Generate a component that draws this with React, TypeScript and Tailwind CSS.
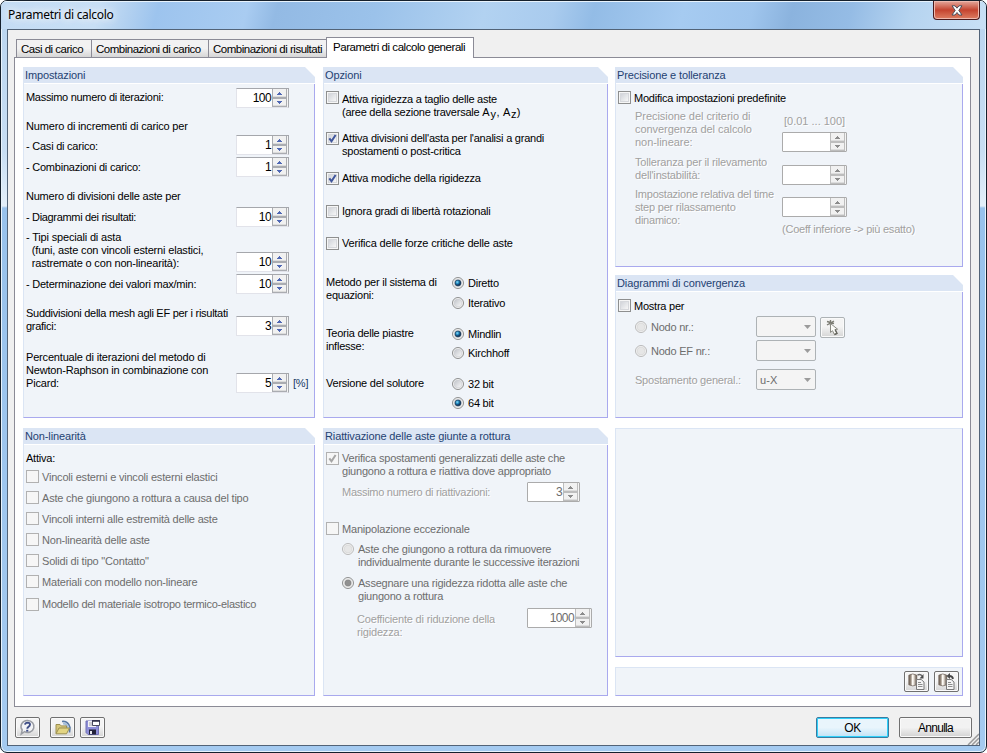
import type { ReactNode } from 'react';
import clsx from 'clsx';

const Text = ({ children, className, soft }: { children: ReactNode; className?: string; soft?: boolean }) => (
  <div
    className={clsx(
      'whitespace-pre leading-[13px]',
      soft && 'text-[#a0a0a0] [text-shadow:1px_1px_0_#fff]',
      className
    )}
  >
    {children}
  </div>
);

const Group = ({ title, className, children }: { title?: string; className: string; children?: ReactNode }) => (
  <section
    className={clsx(
      'flex flex-col border-r border-b border-l border-r-[#a9a9ee] border-b-[#a9a9ee] border-l-[#dbe5f4] bg-[#f0f4f9]',
      !title && 'border-t border-t-[#dbe5f4]',
      className
    )}
  >
    {title && (
      <div className="-mr-px h-[17px] shrink-0 border-b border-white bg-white">
        <div className="h-4 bg-[#dbe5f4] pt-0.5 pl-px text-[#1f4272] [clip-path:polygon(0_0,calc(100%-10px)_0,100%_10px,100%_100%,0_100%)]">
          <Text className="tracking-[-0.12px]">{title}</Text>
        </div>
      </div>
    )}
    {children}
  </section>
);

const Spinner = ({ value, wide, disabled, className }: { value?: string; wide?: boolean; disabled?: boolean; className?: string }) => {
  const arrow = disabled ? '#8c8c8c' : '#5068b4';
  return (
    <div
      className={clsx(
        'flex h-5 shrink-0 border bg-white',
        wide ? 'w-[65px]' : 'w-[53px]',
        disabled ? 'rounded-[1px] border-[#ababab] text-[#6d6d6d]' : 'border-[#e2e3ea] border-r-[#a5a7ac] border-t-[#a5a7ac]',
        className
      )}
    >
      <div className="flex-1 pt-[3px] pr-px text-right text-[12px] leading-[13px] tracking-[-0.6px]">{value}</div>
      <svg width="16" height="18" viewBox="0 0 16 18" shapeRendering="crispEdges">
        <rect width="16" height="18" fill="#f4f4f4" />
        <rect width="15" height="18" fill={disabled ? '#bdbdbd' : '#aaacb1'} />
        <rect x="1" y="0" width="13" height="8" fill="#f1f1f1" />
        <rect x="1" y="10" width="13" height="7" fill="#f1f1f1" />
        <path d="M1 7.5h13M1 16.5h13" stroke="#dcdcdc" />
        <path d="M7 3h1v1h1v1h1v1H5V5h1V4h1zM5 12h5v1H9v1H8v1H7v-1H6v-1H5z" fill={arrow} />
      </svg>
    </div>
  );
};

const CheckBox = ({ checked, disabled }: { checked?: boolean; disabled?: boolean }) => (
  <svg width="13" height="13" viewBox="0 0 13 13" className="shrink-0">
    <defs>
      <linearGradient id="boxFill" x2="1" y2="1">
        <stop offset="0" stopColor="#cfd2d8" />
        <stop offset="1" stopColor="#f9f9f9" />
      </linearGradient>
    </defs>
    <rect x=".5" y=".5" width="12" height="12" fill="#f6f6f6" stroke={disabled ? '#b1b1b1' : '#8e8f8f'} />
    {!disabled && <rect x="2.5" y="2.5" width="8" height="8" fill="url(#boxFill)" stroke="#d6d8dc" />}
    {checked && <path d="M3.3 6.3 5.5 9.2 9.6 3" fill="none" stroke={disabled ? '#a6a6a6' : '#41579c'} strokeWidth="2" />}
  </svg>
);

const Radio = ({ checked, disabled }: { checked?: boolean; disabled?: boolean }) => (
  <svg width="12" height="12" viewBox="0 0 12 12" className="shrink-0">
    <defs>
      <linearGradient id="radioFill" x2="1" y2="1">
        <stop offset="0" stopColor="#bfc2c8" />
        <stop offset="1" stopColor="#fafafa" />
      </linearGradient>
      <radialGradient id="radioDot" cx=".38" cy=".35">
        <stop offset="0" stopColor="#8fdcf8" />
        <stop offset=".55" stopColor="#1d86be" />
        <stop offset="1" stopColor="#12365c" />
      </radialGradient>
    </defs>
    <circle cx="6" cy="6" r="5.5" fill="#f4f4f4" stroke={disabled && !checked ? '#b9b9b9' : '#8e8f8f'} />
    <circle cx="6" cy="6" r="3.9" fill={disabled ? '#e6e6e6' : 'url(#radioFill)'} stroke={disabled ? '#d4d4d4' : '#c9cbd0'} strokeWidth=".6" />
    {checked && <circle cx="6" cy="6" r="3" fill={disabled ? '#909090' : 'url(#radioDot)'} stroke={disabled ? '#7a7a7a' : '#1b3c5a'} strokeWidth=".6" />}
  </svg>
);

const Combo = ({ value }: { value?: string }) => (
  <div className="flex h-[21px] w-[60px] shrink-0 justify-between rounded-[2px] border border-[#adb2b5] bg-[#f4f4f4] pt-1 pr-1 pl-[3px] text-[#6d6d6d]">
    <Text className="tracking-[0.1px]">{value}</Text>
    <svg width="7" height="4" viewBox="0 0 7 4" className="mt-1">
      <path d="M0 0h7L3.5 4z" fill="#9b9b9b" />
    </svg>
  </div>
);

const IconButton = ({ children, className }: { children: ReactNode; className?: string }) => (
  <button
    className={clsx(
      'flex h-[21px] w-[25px] shrink-0 items-center justify-center rounded-[2px] border bg-linear-to-b from-[#f4f4f4] from-45% to-[#d5d5d5] shadow-[inset_0_0_0_1px_#fafafa]',
      className ?? 'border-[#707070]'
    )}
  >
    {children}
  </button>
);

const CopyIcon = ({ back }: { back?: boolean }) => (
  <svg width="18" height="17" viewBox="0 0 18 17">
    <defs>
      <linearGradient id="barrel">
        <stop offset="0" stopColor="#6b5d50" />
        <stop offset=".28" stopColor="#9c8f82" />
        <stop offset=".45" stopColor="#fffdf8" />
        <stop offset=".62" stopColor="#e8e2da" />
        <stop offset="1" stopColor="#54473c" />
      </linearGradient>
    </defs>
    <path d="M.8 2.2Q4.8-.3 8.8 2.2v9.6Q4.8 14 .8 11.8z" fill="url(#barrel)" stroke="#6d6259" strokeWidth=".7" />
    <path d="M8.5 6.5h4.7L16 9v7.5H8.5z" fill="#f4f4f4" stroke="#7b7b7b" />
    <path d="M10 9.5h3M10 11.5h4.5M10 13.5h4.5" stroke="#8c8c8c" />
    {back ? (
      <path d="M15 6Q14.5 3 11.5 3" fill="none" stroke="#444" strokeWidth="1.8" />
    ) : (
      <path d="M9.5 2Q12.5.8 14 3" fill="none" stroke="#666" strokeWidth="1.4" />
    )}
    <path d={back ? 'M12 0v6L8.5 3z' : 'M15.5 1v4.5H11.5z'} fill="#4a4a4a" />
  </svg>
);

// one row of a group: label on the left, spin box on the right
const NumberRow = ({ label, value, className, textClass, spinClass, unit }: {
  label: string;
  value: string;
  className: string;
  textClass?: string;
  spinClass?: string;
  unit?: string;
}) => (
  <div className={clsx('flex items-start', className)}>
    <Text className={clsx('w-[210px]', textClass)}>{label}</Text>
    <Spinner value={value} className={spinClass} />
    {unit && <Text className="mt-[26px] ml-1 text-[#173a66]">{unit}</Text>}
  </div>
);

const CheckRow = ({ label, className, textClass, checked, disabled }: {
  label: ReactNode;
  className: string;
  textClass?: string;
  checked?: boolean;
  disabled?: boolean;
}) => (
  <div className={clsx('flex items-start gap-[3px]', disabled && 'text-[#6d6d6d]', className)}>
    <CheckBox checked={checked} disabled={disabled} />
    <Text className={textClass}>{label}</Text>
  </div>
);

const RadioRow = ({ label, className, checked, disabled }: { label: string; className?: string; checked?: boolean; disabled?: boolean }) => (
  <div className={clsx('flex items-start gap-1', disabled && 'text-[#6d6d6d]', className)}>
    <Radio checked={checked} disabled={disabled} />
    <Text>{label}</Text>
  </div>
);

const choices = [
  { label: 'Metodo per il sistema di\nequazioni:', options: ['Diretto', 'Iterativo'], active: 0, row: 'h-[51px]', first: 'h-5' },
  { label: 'Teoria delle piastre\ninflesse:', options: ['Mindlin', 'Kirchhoff'], active: 0, row: 'h-[50px]', first: 'h-[19px]' },
  { label: 'Versione del solutore', options: ['32 bit', '64 bit'], active: 1, row: 'h-[36px]', first: 'h-[19px]' },
];

const nonLinear = [
  'Vincoli esterni e vincoli esterni elastici',
  'Aste che giungono a rottura a causa del tipo',
  'Vincoli interni alle estremità delle aste',
  'Non-linearità delle aste',
  'Solidi di tipo "Contatto"',
  'Materiali con modello non-lineare',
];

const tabs = [
  { label: 'Casi di carico', width: 'w-[75px]' },
  { label: 'Combinazioni di carico', width: 'w-[117px]' },
  { label: 'Combinazioni di risultati', width: 'w-[118px]' },
];

const Settings = () => (
  <Group title="Impostazioni" className="h-[351px]">
    <div className="flex flex-col pt-1 pl-[2px]">
      <NumberRow label="Massimo numero di iterazioni:" value="100" className="h-8" textClass="pt-[3px] tracking-[-0.3px]" />
      <Text className="h-[15px] tracking-[-0.17px]">Numero di incrementi di carico per</Text>
      <NumberRow label="- Casi di carico:" value="1" className="h-[22px]" textClass="pt-[5px]" />
      <NumberRow label="- Combinazioni di carico:" value="1" className="h-[33px]" textClass="pt-1" />
      <Text className="h-[17px] tracking-[-0.22px]">Numero di divisioni delle aste per</Text>
      <NumberRow label="- Diagrammi dei risultati:" value="10" className="h-6" textClass="pt-1 tracking-[-0.33px]" />
      <NumberRow
        label={'- Tipi speciali di asta\n  (funi, aste con vincoli esterni elastici,\n  rastremate o con non-linearità):'}
        value="10"
        className="h-[43px]"
        textClass="tracking-[-0.17px]"
        spinClass="mt-[21px]"
      />
      <NumberRow label="- Determinazione dei valori max/min:" value="10" className="h-[33px]" textClass="pt-1" />
      <NumberRow label={'Suddivisioni della mesh agli EF per i risultati\ngrafici:'} value="3" className="h-11" textClass="tracking-[-0.27px]" spinClass="mt-[9px]" />
      <NumberRow
        label={'Percentuale di iterazioni del metodo di\nNewton-Raphson in combinazione con\nPicard:'}
        value="5"
        className="h-11"
        textClass="tracking-[-0.18px]"
        spinClass="mt-[22px]"
        unit="[%]"
      />
    </div>
  </Group>
);

const Options = () => (
  <Group title="Opzioni" className="h-[351px]">
    <div className="flex flex-col pt-[7px] pl-[2px]">
      <CheckRow
        label={
          <>
            {'Attiva rigidezza a taglio delle aste\n(aree della sezione traversale '}
            <span className="tracking-[0.8px]">A</span>
            <span className="relative top-0.5 tracking-[0.5px]">y</span>
            <span className="tracking-[0.6px]">, A</span>
            <span className="relative top-0.5 tracking-[0.2px]">z</span>)
          </>
        }
        className="h-[41px]"
        textClass="pt-0.5"
      />
      <CheckRow label={"Attiva divisioni dell'asta per l'analisi a grandi\nspostamenti o post-critica"} className="h-10" checked />
      <CheckRow label="Attiva modiche della rigidezza" className="h-[33px]" checked />
      <CheckRow label="Ignora gradi di libertà rotazionali" className="h-8" />
      <CheckRow label="Verifica delle forze critiche delle aste" className="h-[39px]" textClass="tracking-[-0.18px]" />
      {choices.map((c) => (
        <div key={c.label} className={clsx('flex', c.row)}>
          <Text className="w-[126px]">{c.label}</Text>
          <div className="pt-px">
            {c.options.map((o, i) => (
              <RadioRow key={o} label={o} checked={i === c.active} className={i === 0 ? c.first : 'h-4'} />
            ))}
          </div>
        </div>
      ))}
    </div>
  </Group>
);

const Precision = () => (
  <Group title="Precisione e tolleranza" className="h-[200px]">
    <div className="flex flex-col pt-[7px] pl-[2px]">
      <CheckRow label="Modifica impostazioni predefinite" className="h-[19px]" textClass="pt-px" />
      <div className="flex h-[46px] pl-[17px]">
        <Text soft className="w-[147px] tracking-[-0.05px]">{'Precisione del criterio di\nconvergenza del calcolo\nnon-lineare:'}</Text>
        <div>
          <Text soft className="h-[22px] pt-[5px] pl-0.5 tracking-[0px]">[0.01 ... 100]</Text>
          <Spinner wide disabled />
        </div>
      </div>
      <div className="flex h-8 pl-[17px]">
        <Text soft className="w-[147px] tracking-[-0.17px]">{"Tolleranza per il rilevamento\ndell'instabilità:"}</Text>
        <Spinner wide disabled className="mt-[9px]" />
      </div>
      <div className="flex pl-[17px]">
        <Text soft className="w-[147px] tracking-[-0.22px]">{'Impostazione relativa del time\nstep per rilassamento\ndinamico:'}</Text>
        <div>
          <Spinner wide disabled className="mt-[9px]" />
          <Text soft className="mt-1.5">{'(Coeff inferiore -> più esatto)'}</Text>
        </div>
      </div>
    </div>
  </Group>
);

const Diagrams = () => (
  <Group title="Diagrammi di convergenza" className="mt-2 h-[143px]">
    <div className="flex flex-col pt-[7px] pl-[2px]">
      <CheckRow label="Mostra per" className="h-[17px]" textClass="pt-px" />
      <div className="flex h-6 pl-[17px]">
        <RadioRow label="Nodo nr.:" disabled className="w-[121px] pt-[5px]" />
        <Combo />
        <IconButton className="mt-px ml-1 border-[#adb2b5]">
          <svg width="14" height="16" viewBox="0 0 14 16">
            <path d="M1 1.5 8 3.5M1 5l7-4M4.5 0v5.5" stroke="#7b7b72" strokeWidth="1.4" />
            <path d="M4.5 3.5v9l2-1.8 2 4 2.5-1.2-2-4 2.6-.3z" fill="#fbfbf8" stroke="#8a8a82" />
            <path d="M8.5 14.5 11 13.3 9.2 9.6" fill="none" stroke="#66665e" strokeWidth="1.4" />
          </svg>
        </IconButton>
      </div>
      <div className="flex h-[29px] pl-[17px]">
        <RadioRow label="Nodo EF nr.:" disabled className="w-[121px] pt-[5px]" />
        <Combo />
      </div>
      <div className="flex pl-[17px]">
        <Text soft className="w-[121px] pt-[5px]">Spostamento general.:</Text>
        <Combo value="u-X" />
      </div>
    </div>
  </Group>
);

const NonLinearity = () => (
  <Group title="Non-linearità" className="mt-2.5 h-[268px]">
    <div className="flex flex-col pt-[7px] pl-[2px]">
      <Text className="h-[18px]">Attiva:</Text>
      {nonLinear.map((label) => (
        <CheckRow key={label} label={label} className="h-[21px]" textClass="pt-px tracking-[-0.2px]" disabled />
      ))}
      <CheckRow label="Modello del materiale isotropo termico-elastico" className="mt-[2px]" textClass="tracking-[-0.27px]" disabled />
    </div>
  </Group>
);

const Reactivation = () => (
  <Group title="Riattivazione delle aste giunte a rottura" className="mt-2.5 h-[268px]">
    <div className="flex flex-col pt-[7px] pl-[2px]">
      <CheckRow
        label={'Verifica spostamenti generalizzati delle aste che\ngiungono a rottura e riattiva dove appropriato'}
        className="h-[30px]"
        checked
        disabled
      />
      <div className="flex h-10 pl-4">
        <Text soft className="w-[185px] pt-1 tracking-[-0.28px]">Massimo numero di riattivazioni:</Text>
        <Spinner value="3" disabled />
      </div>
      <CheckRow label="Manipolazione eccezionale" className="h-[21px]" textClass="pt-px tracking-[-0.18px]" disabled />
      <RadioRow label={'Aste che giungono a rottura da rimuovere\nindividualmente durante le successive iterazioni'} className="h-[34px] pl-4" disabled />
      <RadioRow label={'Assegnare una rigidezza ridotta alle aste che\ngiungono a rottura'} className="h-[31px] pl-4" checked disabled />
      <div className="flex pl-[31px]">
        <Text soft className="w-[170px] pt-[5px] tracking-[-0.18px]">{'Coefficiente di riduzione della\nrigidezza:'}</Text>
        <Spinner value="1000" wide disabled />
      </div>
    </div>
  </Group>
);

const Footer = () => (
  <div className="mt-2.5 mr-[7px] ml-[7px] flex">
    <IconButton>
      <svg width="17" height="17" viewBox="0 0 17 17">
        <path d="M8.5 1.5a6.3 6 0 1 1-3 11.2L2.3 15l.9-4A6.2 6 0 0 1 8.5 1.5z" fill="#f3f4f7" stroke="#9a9da3" strokeWidth="1.5" />
        <path d="M6 5.6Q6.4 3.6 8.6 3.6 11 3.7 11 5.6 11 7 9.4 7.8 8.3 8.4 8.3 9.8" fill="none" stroke="#3d4c86" strokeWidth="1.9" />
        <rect x="7.2" y="10.8" width="2.1" height="1.8" fill="#3d4c86" />
      </svg>
    </IconButton>
    <IconButton className="ml-2.5 border-[#707070]">
      <svg width="18" height="16" viewBox="0 0 18 16">
        <path d="M8 1.5q6-1 8 6l-.5 5" fill="none" stroke="#5a7aa3" strokeWidth="1.6" />
        <path d="M9 3.6q4 0 5 5" fill="none" stroke="#a4bedb" strokeWidth="2" />
        <path d="M2 13.5V4.5h4l1.2 1.4h5.3v2" fill="#d6c67a" stroke="#9c9050" />
        <path d="M2 13.8 5 8h10.5l-3 5.8z" fill="#e3d583" stroke="#9c9050" />
      </svg>
    </IconButton>
    <IconButton className="ml-[5px] border-[#707070]">
      <svg width="17" height="17" viewBox="0 0 17 17">
        <path d="M2 2h12.5v13.5H4L2 13.5z" fill="#8f8fd8" stroke="#7070b4" />
        <path d="M4 2h8v6H4z" fill="#f1f1f6" />
        <path d="M5 4h3M5 6h5" stroke="#a4a4ad" />
        <path d="M5 10.5h7v5H5z" fill="#23233a" />
        <path d="M6 12h2v3H6z" fill="#e8e8ef" />
        <path d="M8.5 1.5h7v5h-7z" fill="#fff" stroke="#4a4a60" />
        <path d="M8 2h8" stroke="#2c2c45" strokeWidth="1.6" />
      </svg>
    </IconButton>
    <button className="ml-auto h-[21px] w-[73px] rounded-[2px] border border-[#3a7ba0] bg-linear-to-b from-[#e9f5fc] from-50% to-[#bfe2f5] pt-px text-[12px] leading-[18px] tracking-[-0.5px] shadow-[inset_0_0_0_1px_#2fd0fa]">
      OK
    </button>
    <button className="ml-2.5 h-[21px] w-[73px] rounded-[2px] border border-[#707070] bg-linear-to-b from-[#f2f2f2] from-50% to-[#d2d2d2] pt-px text-[12px] leading-[18px] tracking-[-0.7px] shadow-[inset_0_0_0_1px_#fafafa]">
      Annulla
    </button>
  </div>
);

export default function App() {
  return (
    <div className="h-[753px] w-[987px] bg-white font-['Liberation_Sans',Arial,sans-serif] text-[11px] tracking-[-0.23px] text-black">
      <div className="relative h-full overflow-hidden rounded-[7px] border border-[#15202c] bg-[linear-gradient(180deg,#b9d5f0_0,#c8def3_150px,#e3eff9_205px,#98c2ec_207px,#a4caf0_100%)] shadow-[inset_0_0_0_1px_#e8f3fc]">
        <header className="flex h-7 items-start justify-between bg-[linear-gradient(104deg,#c4dcf4_0,#c8dff5_10%,#b3d1f0_13%,#9dc4ee_16%,#a9ccf1_25%,#93bae4_28%,#9bc2ea_38%,#b2d2f1_49%,#a9cbee_56%,#93bce6_60%,#a6cbf1_69%,#9fc5ed_76%,#8bb3de_80%,#95bce5_86%,#b6d4f0_92%,#c8e0f5_100%)] shadow-[inset_0_1px_0_#e8f3fc]">
          <h1 className="pt-1.5 pl-[7px] font-['Noto_Sans',sans-serif] text-[12px] leading-[16px] tracking-[-0.3px] [text-shadow:0_0_8px_#fff,0_0_8px_#fff]">
            Parametri di calcolo
          </h1>
          <button className="mr-1.5 flex h-[19px] w-[47px] items-center justify-center rounded-b-[4px] border border-t-0 border-[#4a1a1c] bg-linear-to-b from-[#e3a79c] via-[#c4432f] via-50% to-[#dd7d62] shadow-[inset_0_0_0_1px_#eeb9ae]">
            <svg width="12" height="11" viewBox="0 0 12 11">
              <path d="M1 .8h3L6 3.2 8 .8h3L7.8 5.4 11 10H8L6 7.5 4 10H1l3.2-4.6z" fill="#fff" stroke="#4c4f5c" strokeWidth="1" />
            </svg>
          </button>
        </header>

        <main className="relative ml-1.5 h-[717px] w-[973px] border border-[#526377] bg-[#f0f0f0] pt-[7px]">
          <div className="relative z-10 ml-2 flex h-5 items-end">
            <div className="flex h-[18px] border-t border-l border-[#8b8b96]">
              {tabs.map((t) => (
                <div
                  key={t.label}
                  className={clsx(
                    'border-r border-[#8b8b96] bg-linear-to-b from-[#f2f2f2] from-50% to-[#d6d6d6] pt-[3px] pl-1 text-[11.5px] leading-[13px] tracking-[-0.5px] whitespace-nowrap',
                    t.width
                  )}
                >
                  {t.label}
                </div>
              ))}
            </div>
            <div className="-mb-px -ml-px h-[21px] w-[148px] border border-b-0 border-[#8b8b96] bg-white pt-[3px] pl-1.5 text-[11.5px] leading-[13px] tracking-[-0.45px] whitespace-nowrap">
              Parametri di calcolo generali
            </div>
          </div>

          <div className="ml-1.5 flex h-[650px] w-[957px] border border-[#8b8b96] bg-white pt-[9px] pl-2">
            <div className="w-[292px]">
              <Settings />
              <NonLinearity />
            </div>
            <div className="ml-2 w-[285px]">
              <Options />
              <Reactivation />
            </div>
            <div className="ml-[7px] w-[348px]">
              <Precision />
              <Diagrams />
              <Group className="mt-2.5 h-[229px]" />
              <Group className="mt-2.5 h-[29px]">
                <div className="flex justify-end gap-[5px] pt-[3px] pr-[3px]">
                  <IconButton><CopyIcon /></IconButton>
                  <IconButton><CopyIcon back /></IconButton>
                </div>
              </Group>
            </div>
          </div>

          <Footer />

          <svg width="12" height="12" viewBox="0 0 12 12" className="absolute right-0 bottom-0">
            <path d="M1 12 12 1M5 12l7-7M9 12l3-3" stroke="#9a9a9a" strokeWidth="1.5" />
          </svg>
        </main>
      </div>
    </div>
  );
}
